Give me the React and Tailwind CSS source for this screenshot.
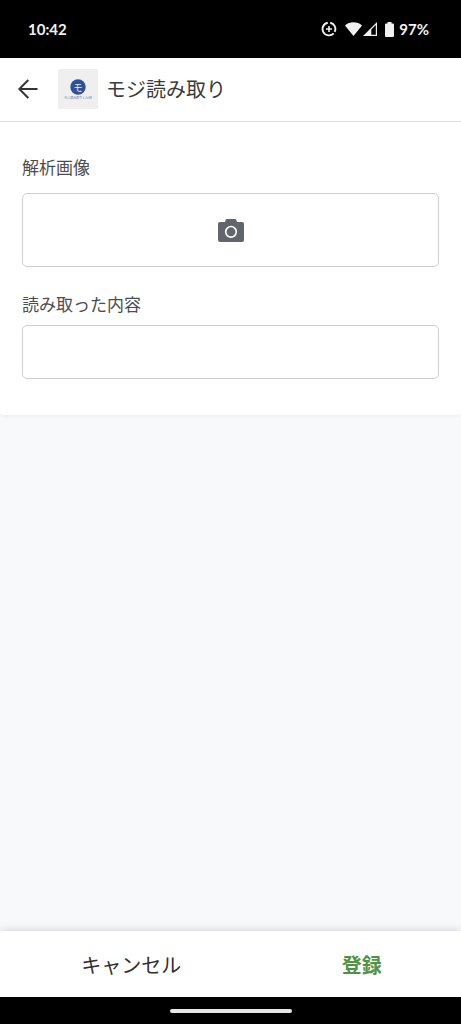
import { useState } from "react";

function StatusBar() {
  return (
    <div className="h-[58px] shrink-0 bg-black text-[#f1f1f1] flex items-center justify-between pl-7 pr-8 font-['Lato',sans-serif] text-[15px] font-bold">
      <span>10:42</span>

      <div className="flex items-center">
        {/* Data saver */}
        <svg className="w-4 h-4 mr-2" viewBox="0 0 16 16" fill="none" stroke="currentColor">
          <path d="M9.200 1.700A6.400 6.400 0 0 1 13.700 10.800M12.700 12.300A6.400 6.400 0 1 1 6.800 1.700" strokeWidth="1.900" />
          <path d="M8 5v6M5 8h6" strokeWidth="1.600" />
        </svg>
        {/* Wifi */}
        <svg className="w-[17px] h-[14px]" viewBox="0 0 17 14" fill="currentColor">
          <path d="M8.500 14 0 3.400C2.300 1.400 5.200.3 8.500.3s6.200 1.100 8.500 3.100z" />
        </svg>
        {/* Mobile signal */}
        <svg className="w-[14px] h-[14px] ml-px" viewBox="0 0 14 14" fill="currentColor">
          <path d="M14 0v14H0zM12.800 3 8.300 7.500v5.300h4.500z" fillRule="evenodd" />
        </svg>
        {/* Battery */}
        <svg className="w-[9px] h-[15px] ml-2 mr-[5px]" viewBox="0 0 9 15" fill="currentColor">
          <path d="M2.500 0h4v1.500H8a1 1 0 0 1 1 1V14a1 1 0 0 1-1 1H1a1 1 0 0 1-1-1V2.500a1 1 0 0 1 1-1h1.500z" />
        </svg>
        <span>97%</span>
      </div>
    </div>
  );
}

function AppLogo() {
  return (
    <svg className="w-10 h-10 ml-5 mr-2 bg-[#efefef]" viewBox="0 0 40 40" textAnchor="middle">
      <circle cx="20" cy="18" r="7.700" fill="#2f5195" />
      <text x="20" y="21.500" fontSize="9" fill="#e8edf6">
        モ
      </text>
      <text x="20" y="30" fontSize="3" fill="#5d75a8">
        モジ読み取りくんAR
      </text>
    </svg>
  );
}

export default function App() {
  const [content, setContent] = useState("");

  return (
    <div className="min-h-screen flex flex-col bg-[#f7f9fb] font-['Noto_Sans_CJK_JP',sans-serif]">
      <StatusBar />

      {/* Header */}
      <header className="h-16 shrink-0 bg-white border-b border-[#e2e2e2] flex items-center px-[18px] pb-px">
        <button type="button" aria-label="戻る" className="text-[#333]">
          <svg className="w-5 h-5" viewBox="0 0 20 20" fill="none" stroke="currentColor" strokeWidth="2">
            <path d="M19.500 10H1.500M10.300 1 1.300 10l9 9" />
          </svg>
        </button>
        <AppLogo />
        <h1 className="text-xl text-[#3a3a3a]">モジ読み取り</h1>
      </header>

      {/* Form */}
      <main className="flex-1">
        <form
          id="entry"
          className="bg-white rounded-b-sm shadow-[0_1px_4px_rgba(0,0,0,0.06)] px-[22px] pt-[31px] pb-9"
          onSubmit={(e) => e.preventDefault()}
        >
          <label htmlFor="image" className="block text-[17px] leading-7 text-[#4b4d50]">
            解析画像
          </label>
          <button
            id="image"
            type="button"
            className="mt-3 w-full h-[74px] rounded-[5px] border border-[#cfcfd1] flex items-center justify-center"
          >
            <svg className="w-[26px] h-[23px]" viewBox="0 0 26 23" fill="#62666c">
              <path d="M9 0h8a1.500 1.500 0 0 1 1.500 1.200L19 3h5a2 2 0 0 1 2 2v16a2 2 0 0 1-2 2H2a2 2 0 0 1-2-2V5a2 2 0 0 1 2-2h5l.5-1.800A1.500 1.500 0 0 1 9 0z" />
              <circle cx="13" cy="12.800" r="5.300" fill="none" stroke="#fff" strokeWidth="1.700" />
            </svg>
          </button>

          <label htmlFor="content" className="block mt-[23px] text-[17px] leading-7 text-[#4b4d50]">
            読み取った内容
          </label>
          <input
            id="content"
            type="text"
            value={content}
            onChange={(e) => setContent(e.target.value)}
            className="block mt-[7px] w-full h-[54px] px-3 rounded-[5px] border border-[#cfcfd1] text-[17px] outline-none"
          />
        </form>
      </main>

      {/* Actions */}
      <footer className="h-[66px] shrink-0 bg-white grid grid-cols-2 text-xl shadow-[0_-1px_8px_rgba(0,0,0,0.14)]">
        <button type="button" className="pl-8 pt-[2px] text-[#2f2f2f]">
          キャンセル
        </button>
        <button type="submit" form="entry" className="pl-8 pt-[2px] font-bold text-[#509347]">
          登録
        </button>
      </footer>

      {/* Gesture bar */}
      <div className="h-[27px] shrink-0 bg-black flex items-center justify-center">
        <div className="w-[122px] h-1 rounded-full bg-[#e6e6e6]" />
      </div>
    </div>
  );
}
